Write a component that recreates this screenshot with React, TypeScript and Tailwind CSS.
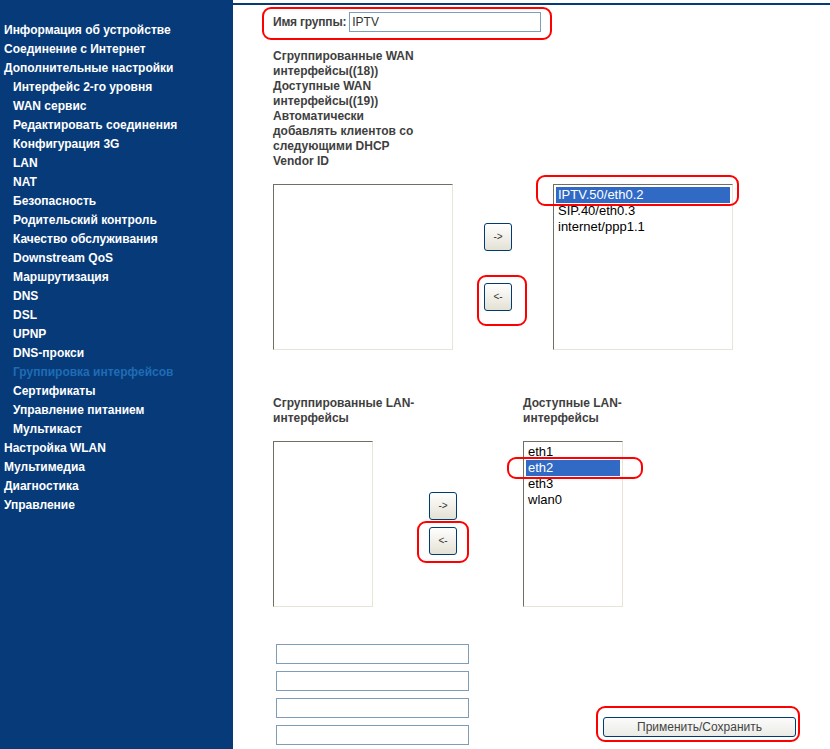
import React from "react";

const font = { fontFamily: '"Liberation Sans", Arial, sans-serif' };

type NavItem = { label: string; sub?: boolean; active?: boolean };

const nav: NavItem[] = [
  { label: "Информация об устройстве" },
  { label: "Соединение с Интернет" },
  { label: "Дополнительные настройки" },
  { label: "Интерфейс 2-го уровня", sub: true },
  { label: "WAN сервис", sub: true },
  { label: "Редактировать соединения", sub: true },
  { label: "Конфигурация 3G", sub: true },
  { label: "LAN", sub: true },
  { label: "NAT", sub: true },
  { label: "Безопасность", sub: true },
  { label: "Родительский контроль", sub: true },
  { label: "Качество обслуживания", sub: true },
  { label: "Downstream QoS", sub: true },
  { label: "Маршрутизация", sub: true },
  { label: "DNS", sub: true },
  { label: "DSL", sub: true },
  { label: "UPNP", sub: true },
  { label: "DNS-прокси", sub: true },
  { label: "Группировка интерфейсов", sub: true, active: true },
  { label: "Сертификаты", sub: true },
  { label: "Управление питанием", sub: true },
  { label: "Мультикаст", sub: true },
  { label: "Настройка WLAN" },
  { label: "Мультимедиа" },
  { label: "Диагностика" },
  { label: "Управление" },
];

function SmallButton({ label }: { label: string }) {
  return (
    <div className="w-[28px] h-[28px] rounded-[3px] border border-[#003c74] bg-linear-to-b from-white to-[#e4e1d4] flex items-center justify-center text-[10px] text-[#333] leading-none">
      {label}
    </div>
  );
}

function ListBox({
  w,
  items,
  selected,
}: {
  w: string;
  items: string[];
  selected?: number;
}) {
  return (
    <div
      className={`${w} h-[166px] shrink-0 border border-t-[#716f64] border-l-[#716f64] border-b-[#e8e5d6] border-r-[#e8e5d6] bg-white pt-[2px] px-[2px]`}
    >
      {items.map((it, i) => (
        <div
          key={it}
          className={`h-[16px] leading-[16px] text-[13px] pl-[2px] ${
            i === selected ? "bg-[#316ac5] text-white" : "text-black"
          }`}
        >
          {it}
        </div>
      ))}
    </div>
  );
}

function RedBox({ cls }: { cls: string }) {
  return (
    <div
      className={`absolute pointer-events-none border-2 border-[#ff0000] rounded-[9px] ${cls}`}
    />
  );
}

export default function App() {
  return (
    <div className="relative flex w-[830px] h-[749px] overflow-hidden bg-white" style={font}>
      <aside className="w-[233px] shrink-0 bg-[#063a79] pt-[21px]">
        {nav.map((n) => (
          <div
            key={n.label}
            className={`h-[19px] leading-[19px] text-[12px] font-bold whitespace-nowrap ${
              n.sub ? "pl-[13px]" : "pl-[4px]"
            } ${n.active ? "text-[#1f6cb5]" : "text-white"}`}
          >
            {n.label}
          </div>
        ))}
      </aside>

      <main className="flex-1 mt-[3px] border-t-2 border-[#063a79] pl-[40px] text-[#3f3f3f]">
        {/* group name */}
        <div className="flex items-center gap-[3px] mt-[7px] h-[20px]">
          <span className="shrink-0 text-[12px] font-bold whitespace-nowrap tracking-[-0.2px]">Имя группы:</span>
          <div className="w-[192px] h-[20px] border border-[#7f9db9] text-[12px] leading-[18px] pl-[2px] text-[#333]">
            IPTV
          </div>
        </div>

        {/* WAN labels */}
        <div className="mt-[17px] text-[12px] font-bold leading-[15px]">
          <div>Сгруппированные WAN</div>
          <div>интерфейсы((18))</div>
          <div>Доступные WAN</div>
          <div>интерфейсы((19))</div>
          <div>Автоматически</div>
          <div>добавлять клиентов со</div>
          <div>следующими DHCP</div>
          <div>Vendor ID</div>
        </div>

        {/* WAN lists */}
        <div className="flex items-start mt-[15px]">
          <ListBox w="w-[180px]" items={[]} />
          <div className="ml-[31px] pt-[39px] flex flex-col gap-[32px]">
            <SmallButton label="->" />
            <SmallButton label="<-" />
          </div>
          <div className="ml-[41px]">
            <ListBox
              w="w-[180px]"
              items={["IPTV.50/eth0.2", "SIP.40/eth0.3", "internet/ppp1.1"]}
              selected={0}
            />
          </div>
        </div>

        {/* LAN labels */}
        <div className="flex mt-[46px] text-[12px] font-bold leading-[15px]">
          <div className="w-[250px]">
            <div>Сгруппированные LAN-</div>
            <div>интерфейсы</div>
          </div>
          <div>
            <div>Доступные LAN-</div>
            <div>интерфейсы</div>
          </div>
        </div>

        {/* LAN lists */}
        <div className="flex items-start mt-[15px]">
          <ListBox w="w-[100px]" items={[]} />
          <div className="ml-[56px] pt-[51px] flex flex-col gap-[7px]">
            <SmallButton label="->" />
            <SmallButton label="<-" />
          </div>
          <div className="ml-[66px]">
            <ListBox w="w-[100px]" items={["eth1", "eth2", "eth3", "wlan0"]} selected={1} />
          </div>
        </div>

        {/* bottom inputs + apply */}
        <div className="flex items-end mt-[37px] ml-[3px]">
          <div className="flex flex-col gap-[7px]">
            <div className="w-[193px] h-[20px] border border-[#7f9db9] bg-white" />
            <div className="w-[193px] h-[20px] border border-[#7f9db9] bg-white" />
            <div className="w-[193px] h-[20px] border border-[#7f9db9] bg-white" />
            <div className="w-[193px] h-[20px] border border-[#7f9db9] bg-white" />
          </div>
          <div className="ml-[134px] mb-[8px] w-[193px] h-[20px] rounded-[3px] border border-[#003c74] bg-linear-to-b from-[#fbfbfb] to-[#ebebe6] flex items-center justify-center text-[12px] text-[#444]">
            Применить/Сохранить
          </div>
        </div>
      </main>

      {/* annotations */}
      <RedBox cls="left-[262px] top-[7px] w-[290px] h-[33px]" />
      <RedBox cls="left-[536px] top-[175px] w-[203px] h-[31px]" />
      <RedBox cls="left-[477px] top-[275px] w-[50px] h-[51px]" />
      <RedBox cls="left-[507px] top-[457px] w-[136px] h-[22px]" />
      <RedBox cls="left-[417px] top-[521px] w-[52px] h-[42px]" />
      <RedBox cls="left-[596px] top-[706px] w-[204px] h-[36px]" />
    </div>
  );
}
